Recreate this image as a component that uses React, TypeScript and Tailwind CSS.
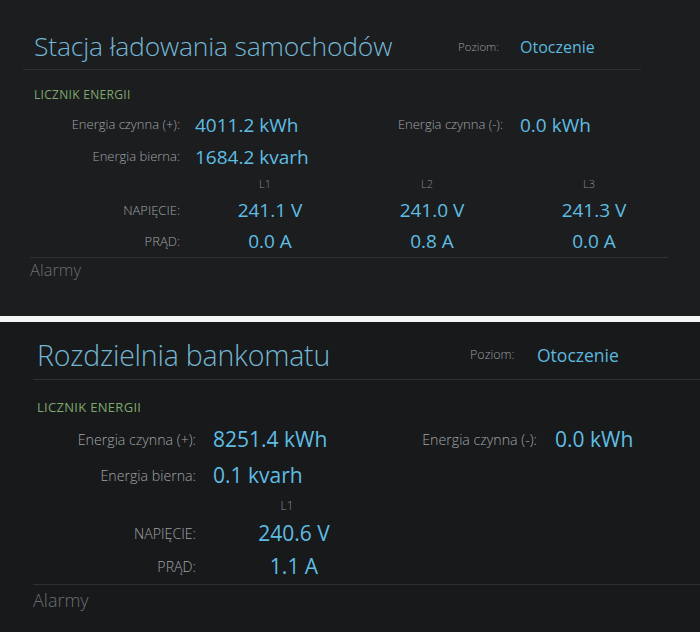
import React from "react";

const font = { fontFamily: '"Open Sans", "DejaVu Sans", sans-serif' };

const ChargingStation = () => (
  <div className="h-[316px] bg-[#1b1d1f]">
    <div className="pt-[24px]">
      {/* header */}
      <div className="ml-[23px] w-[618px] h-[46px] flex items-center border-b border-[#2f3235]">
        <div className="pl-[11px] w-[435px] text-[26.5px] font-light text-[#74b6d3] tracking-[-0.2px]">
          Stacja ładowania samochodów
        </div>
        <span className="w-[62px] text-[11.5px] font-light text-[#9a9da0]">Poziom:</span>
        <span className="text-[16px] text-[#5db8de]">Otoczenie</span>
      </div>

      <div className="pl-[34px]">
        <div className="mt-[15px] h-[20px] flex items-center text-[12px] tracking-[0.3px] text-[#7fa86d]">LICZNIK ENERGII</div>

        <div className="mt-[4px] h-[32px] flex items-center">
          <span className="w-[146px] text-right text-[13px] font-light text-[#a0a3a6]">Energia czynna (+):</span>
          <span className="w-[170px] pl-[15px] text-[19px] text-[#5fbde3]">4011.2 kWh</span>
          <span className="w-[153px] text-right text-[13px] font-light text-[#a0a3a6]">Energia czynna (-):</span>
          <span className="pl-[17px] text-[19px] text-[#5fbde3]">0.0 kWh</span>
        </div>
        <div className="h-[32px] flex items-center">
          <span className="w-[146px] text-right text-[13px] font-light text-[#a0a3a6]">Energia bierna:</span>
          <span className="pl-[15px] text-[19px] text-[#5fbde3]">1684.2 kvarh</span>
        </div>

        {/* phases */}
        <div className="h-[22px] flex items-center text-[11px] font-light text-[#8a8d90]">
          <span className="w-[150px]" />
          <span className="w-[162px] text-center">L1</span>
          <span className="w-[162px] text-center">L2</span>
          <span className="w-[162px] text-center">L3</span>
        </div>
        <div className="h-[31px] flex items-center">
          <span className="w-[146px] text-right text-[13px] font-light text-[#a0a3a6]">NAPIĘCIE:</span>
          <span className="ml-[9px] w-[162px] text-center text-[19px] text-[#5fbde3]">241.1 V</span>
          <span className="w-[162px] text-center text-[19px] text-[#5fbde3]">241.0 V</span>
          <span className="w-[162px] text-center text-[19px] text-[#5fbde3]">241.3 V</span>
        </div>
        <div className="h-[31px] flex items-center">
          <span className="w-[146px] text-right text-[13px] font-light text-[#a0a3a6]">PRĄD:</span>
          <span className="ml-[9px] w-[162px] text-center text-[19px] text-[#5fbde3]">0.0 A</span>
          <span className="w-[162px] text-center text-[19px] text-[#5fbde3]">0.8 A</span>
          <span className="w-[162px] text-center text-[19px] text-[#5fbde3]">0.0 A</span>
        </div>
      </div>

      <div className="ml-[30px] w-[638px] h-[25px] flex items-center border-t border-[#2f3235] text-[16.5px] font-light text-[#6c7073]">
        Alarmy
      </div>
    </div>
  </div>
);

const AtmSwitchboard = () => (
  <div className="h-[310px] bg-[#17191b]">
    <div className="pt-[10px]">
      <div className="ml-[33px] h-[48px] flex items-center border-b border-[#2d3033]">
        <div className="pl-[4px] w-[437px] text-[28.5px] font-light text-[#74b6d3] tracking-[-0.2px]">
          Rozdzielnia bankomatu
        </div>
        <span className="w-[67px] text-[12.5px] font-light text-[#9a9da0]">Poziom:</span>
        <span className="text-[17.5px] text-[#5db8de]">Otoczenie</span>
      </div>

      <div className="pl-[37px]">
        <div className="mt-[18px] h-[20px] flex items-center text-[13px] tracking-[0.3px] text-[#7fa86d]">LICZNIK ENERGII</div>

        <div className="mt-[4px] h-[36px] flex items-center">
          <span className="w-[159px] text-right text-[14.2px] font-light text-[#a0a3a6]">Energia czynna (+):</span>
          <span className="w-[185px] pl-[17px] text-[21px] text-[#5fbde3]">8251.4 kWh</span>
          <span className="w-[156px] text-right text-[14.2px] font-light text-[#a0a3a6]">Energia czynna (-):</span>
          <span className="pl-[18px] text-[21px] text-[#5fbde3]">0.0 kWh</span>
        </div>
        <div className="h-[36px] flex items-center">
          <span className="w-[159px] text-right text-[14.2px] font-light text-[#a0a3a6]">Energia bierna:</span>
          <span className="pl-[17px] text-[21px] text-[#5fbde3]">0.1 kvarh</span>
        </div>

        <div className="h-[24px] flex items-center text-[12px] font-light text-[#8a8d90]">
          <span className="w-[160px]" />
          <span className="w-[180px] text-center">L1</span>
        </div>
        <div className="h-[32px] flex items-center">
          <span className="w-[159px] text-right text-[14.2px] font-light text-[#a0a3a6]">NAPIĘCIE:</span>
          <span className="w-[196px] text-center text-[21px] text-[#5fbde3]">240.6 V</span>
        </div>
        <div className="h-[34px] flex items-center">
          <span className="w-[159px] text-right text-[14.2px] font-light text-[#a0a3a6]">PRĄD:</span>
          <span className="w-[196px] text-center text-[21px] text-[#5fbde3]">1.1 A</span>
        </div>
      </div>

      <div className="ml-[33px] h-[31px] flex items-center border-t border-[#2d3033] text-[18px] font-light text-[#6c7073]">
        Alarmy
      </div>
    </div>
  </div>
);

export default function App() {
  return (
    <div className="w-[700px] h-[632px] overflow-hidden bg-[#f4f5f5]" style={font}>
      <ChargingStation />
      <div className="h-[6px] bg-[#f4f5f5]" />
      <AtmSwitchboard />
    </div>
  );
}
